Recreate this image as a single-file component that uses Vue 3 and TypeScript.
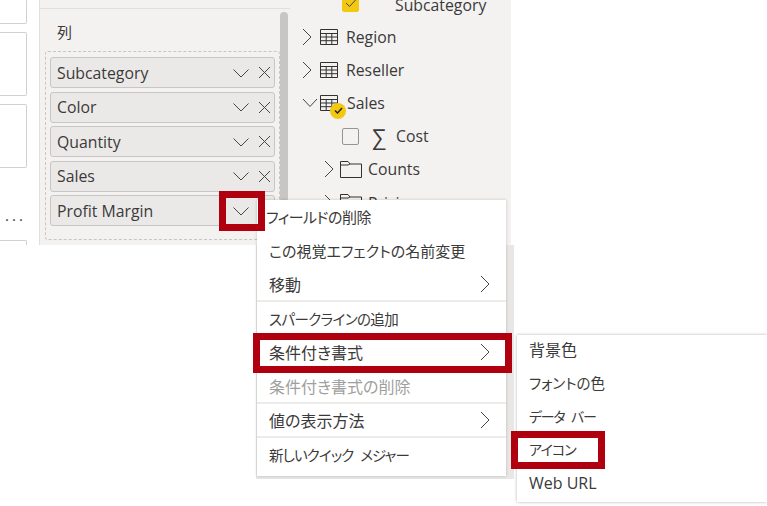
<script setup lang="ts">
const columns = ['Subcategory', 'Color', 'Quantity', 'Sales', 'Profit Margin']

interface MenuItem {
  label: string
  fit?: string
  arrow?: boolean
  disabled?: boolean
  divider?: boolean
}

const menuItems: MenuItem[] = [
  { label: 'フィールドの削除', fit: 'fit-first' },
  { label: 'この視覚エフェクトの名前変更', fit: 'fit-a' },
  { label: '移動', arrow: true, divider: true },
  { label: 'スパークラインの追加', fit: 'fit-b' },
  { label: '条件付き書式', arrow: true },
  { label: '条件付き書式の削除', disabled: true, divider: true },
  { label: '値の表示方法', arrow: true, divider: true },
  { label: '新しいクイック メジャー', fit: 'fit-e' },
]

const subItems = [
  { label: '背景色', fit: '' },
  { label: 'フォントの色', fit: 'fit-b-plain' },
  { label: 'データ バー', fit: 'fit-d' },
  { label: 'アイコン', fit: 'fit-c' },
  { label: 'Web URL', fit: '' },
]

const tableRows = ['Region', 'Reseller']
</script>

<template>
  <div class="page">
    <div class="tiles">
      <div class="tile t1"></div>
      <div class="tile t2"></div>
      <div class="tile t2"></div>
      <div class="dots">...</div>
      <div class="tile t4"></div>
    </div>

    <section class="wells">
      <div class="wells-top"></div>
      <div class="wells-body">
        <div class="well-title">列</div>
        <div class="well">
          <div v-for="c in columns" :key="c" class="pill">
            <span class="pill-name">{{ c }}</span>
            <svg class="ico" width="18" height="12" viewBox="0 0 18 12"><path d="M1.5 2.5 9 10 16.5 2.5" /></svg>
            <svg class="ico" width="13" height="13" viewBox="0 0 13 13"><path d="M1 1 12 12M12 1 1 12" /></svg>
          </div>
        </div>
        <div class="scrollbar"></div>
      </div>
    </section>

    <section class="fields">
      <div class="row leaf top-leaf">
        <span class="check on">
          <svg width="12" height="10" viewBox="0 0 12 10"><path d="M1 5 4.5 8.5 11 1.5" /></svg>
        </span>
        <span class="top-name">Subcategory</span>
      </div>
      <div v-for="t in tableRows" :key="t" class="row">
        <svg class="chev" width="10" height="18" viewBox="0 0 10 18"><path d="M1 1 9 9 1 17" /></svg>
        <svg class="table" width="18" height="16" viewBox="0 0 18 16">
          <path d="M.5 .5H17.5V15.5H.5ZM.5 4.5H17.5M.5 8H17.5M.5 11.7H17.5M6.2 4.5V15.5M11.8 4.5V15.5" />
        </svg>
        <span class="name">{{ t }}</span>
      </div>
      <div class="row">
        <svg class="chev-open" width="16" height="10" viewBox="0 0 16 10"><path d="M1 1 8 8.5 15 1" /></svg>
        <span class="table-wrap">
          <svg class="table" width="18" height="16" viewBox="0 0 18 16">
            <path d="M.5 .5H17.5V15.5H.5ZM.5 4.5H17.5M.5 8H17.5M.5 11.7H17.5M6.2 4.5V15.5M11.8 4.5V15.5" />
          </svg>
          <span class="badge">
            <svg width="9" height="7" viewBox="0 0 9 7"><path d="M1 3.5 3.5 6 8 1" /></svg>
          </span>
        </span>
        <span class="name sales">Sales</span>
      </div>
      <div class="row leaf">
        <span class="check"></span>
        <span class="sigma">∑</span>
        <span class="name">Cost</span>
      </div>
      <div class="row folder-row">
        <svg class="chev" width="10" height="18" viewBox="0 0 10 18"><path d="M1 1 9 9 1 17" /></svg>
        <svg class="folder" width="22" height="17" viewBox="0 0 22 17"><path d="M.5 16.5V.5H8L10 3H21.5V16.5ZM.5 4H8L10 3" /></svg>
        <span class="name">Counts</span>
      </div>
      <div class="row folder-row">
        <svg class="chev" width="10" height="18" viewBox="0 0 10 18"><path d="M1 1 9 9 1 17" /></svg>
        <svg class="folder" width="22" height="17" viewBox="0 0 22 17"><path d="M.5 16.5V.5H8L10 3H21.5V16.5ZM.5 4H8L10 3" /></svg>
        <span class="name">Pricing</span>
      </div>
    </section>

    <div class="menu-back"></div>
    <div class="menu">
      <div
        v-for="m in menuItems"
        :key="m.label"
        class="menu-item"
        :class="{ disabled: m.disabled, divider: m.divider }"
      >
        <span :class="m.fit">{{ m.label }}</span>
        <svg v-if="m.arrow" class="chev" width="10" height="18" viewBox="0 0 10 18"><path d="M1 1 9 9 1 17" /></svg>
      </div>
    </div>

    <div class="submenu">
      <div v-for="s in subItems" :key="s.label" class="sub-item">
        <span :class="s.fit">{{ s.label }}</span>
      </div>
    </div>

    <div class="mark mark-arrow"></div>
    <div class="mark mark-format"></div>
    <div class="mark mark-icon"></div>
  </div>
</template>

<style>
html,
body {
  margin: 0;
  background: #fff;
}
</style>

<style scoped>
.page {
  position: relative;
  width: 767px;
  height: 506px;
  overflow: hidden;
  display: flex;
  align-items: flex-start;
  background: #fff;
  color: #3b3a39;
  font-family: "Open Sans", "Noto Sans CJK JP", sans-serif;
  font-size: 16px;
  font-feature-settings: "palt";
}

.tiles {
  width: 27px;
  margin-right: 12px;
  display: flex;
  flex-direction: column;
}

.tile {
  box-sizing: border-box;
  width: 27px;
  border: 1px solid #d2d0ce;
  border-left: 0;
  border-radius: 0 2px 2px 0;
}

.t1 {
  height: 25px;
  margin-top: -1px;
  margin-bottom: 8px;
}

.t2 {
  height: 64px;
  margin-bottom: 8px;
}

.t4 {
  height: 5px;
  border-bottom: 0;
  border-radius: 0 2px 0 0;
}

.dots {
  height: 64px;
  line-height: 78px;
  padding-left: 5px;
  font-size: 15px;
  letter-spacing: 3px;
}

.wells {
  box-sizing: border-box;
  width: 251px;
  height: 245px;
  border-left: 1px solid #e1dfdd;
  background: #f3f2f1;
}

.wells-top {
  height: 8px;
  border-bottom: 1px solid #e1dfdd;
}

.wells-body {
  position: relative;
  padding: 13px 0 0 5px;
}

.well-title {
  height: 29px;
  padding-left: 12px;
  font-size: 15px;
  line-height: 20px;
}

.well {
  box-sizing: border-box;
  width: 235px;
  height: 189px;
  padding: 5px 4px;
  border: 1px dashed #c8c6c4;
  border-radius: 3px;
  display: flex;
  flex-direction: column;
  gap: 3.5px;
}

.pill {
  box-sizing: border-box;
  height: 31px;
  flex: none;
  display: flex;
  align-items: center;
  gap: 8px;
  padding: 0 3px 0 6px;
  background: #ebe9e8;
  border: 1px solid #c8c6c4;
  border-radius: 3px;
}

.pill-name {
  flex: 1;
  font-size: 15.8px;
  white-space: nowrap;
}

.ico path,
.chev path,
.chev-open path {
  fill: none;
  stroke: #484644;
  stroke-width: 1;
}

.scrollbar {
  position: absolute;
  left: 240px;
  top: 3px;
  width: 8px;
  height: 190px;
  border-radius: 4px;
  background: #c8c6c4;
}

.fields {
  box-sizing: border-box;
  width: 221px;
  height: 245px;
  background: #f3f2f1;
  overflow: hidden;
}

.row {
  height: 33.2px;
  display: flex;
  align-items: center;
  padding-left: 12px;
  gap: 8px;
  white-space: nowrap;
}

.top-leaf {
  height: 20px;
  margin-top: -5px;
  margin-bottom: 5px;
}

.top-leaf .check {
  margin-bottom: 4px;
}

.top-name {
  margin-left: 28px;
  font-size: 15.8px;
}

.leaf {
  padding-left: 52px;
}

.name {
  font-size: 15.8px;
}

.sales {
  margin-left: 1px;
}

.table path,
.folder path {
  fill: none;
  stroke: #323130;
  stroke-width: 1;
}

.check {
  box-sizing: border-box;
  width: 17px;
  height: 17px;
  flex: none;
  border: 1px solid #979593;
  border-radius: 2px;
  display: flex;
  align-items: center;
  justify-content: center;
}

.check.on {
  background: #f2c811;
  border-color: #f2c811;
}

.check svg path {
  fill: none;
  stroke: #484644;
  stroke-width: 1;
}

.sigma {
  width: 18px;
  margin-left: 3px;
  font-size: 22px;
  line-height: 20px;
  text-align: center;
}

.table-wrap {
  position: relative;
  display: flex;
  margin-left: -6px;
}

.badge {
  position: absolute;
  left: 10px;
  top: 8px;
  width: 16px;
  height: 16px;
  border-radius: 50%;
  background: #f2c811;
  display: flex;
  align-items: center;
  justify-content: center;
}

.badge path {
  fill: none;
  stroke: #252423;
  stroke-width: 1.5;
}

.folder-row {
  padding-left: 34px;
  gap: 6px;
}

.menu-back {
  position: absolute;
  left: 256px;
  top: 245px;
  width: 258px;
  height: 234px;
  background: #e8e7e6;
}

.menu {
  position: absolute;
  left: 257px;
  top: 200px;
  width: 249px;
  height: 276px;
  background: #fff;
  box-shadow: 0 0 3px rgba(0, 0, 0, 0.2);
}

.menu-item {
  box-sizing: border-box;
  height: 34px;
  display: flex;
  align-items: center;
  justify-content: space-between;
  padding: 0 16px 2px 12px;
  white-space: nowrap;
}

.menu-item.divider {
  box-shadow: inset 0 -2px #edebe9;
}

.menu-item.disabled {
  color: #a19f9d;
}

.fit-first {
  margin-left: -3px;
  font-size: 15px;
  letter-spacing: -0.5px;
}

.fit-a {
  font-size: 15px;
}

.fit-b {
  font-size: 14.5px;
  letter-spacing: -0.6px;
}

.fit-b-plain {
  font-size: 14.5px;
}

.fit-c {
  font-size: 14px;
  letter-spacing: -0.9px;
}

.fit-d {
  font-size: 14px;
  letter-spacing: -1.2px;
  word-spacing: 4px;
}

.fit-e {
  font-size: 14.5px;
  letter-spacing: -0.9px;
  word-spacing: 4px;
}

.submenu {
  position: absolute;
  left: 517px;
  top: 335px;
  width: 250px;
  height: 167px;
  background: #fff;
  box-shadow: 0 0 3px rgba(0, 0, 0, 0.3);
}

.sub-item {
  height: 33px;
  line-height: 31px;
  padding-left: 12px;
}

.sub-item:last-child {
  line-height: 33px;
}

.mark {
  box-sizing: border-box;
  position: absolute;
  border: 7px solid #b0000f;
}

.mark-arrow {
  left: 219px;
  top: 191px;
  width: 46px;
  height: 40px;
}

.mark-format {
  left: 253px;
  top: 333px;
  width: 259px;
  height: 40px;
}

.mark-icon {
  left: 511px;
  top: 431px;
  width: 94px;
  height: 38px;
}
</style>
